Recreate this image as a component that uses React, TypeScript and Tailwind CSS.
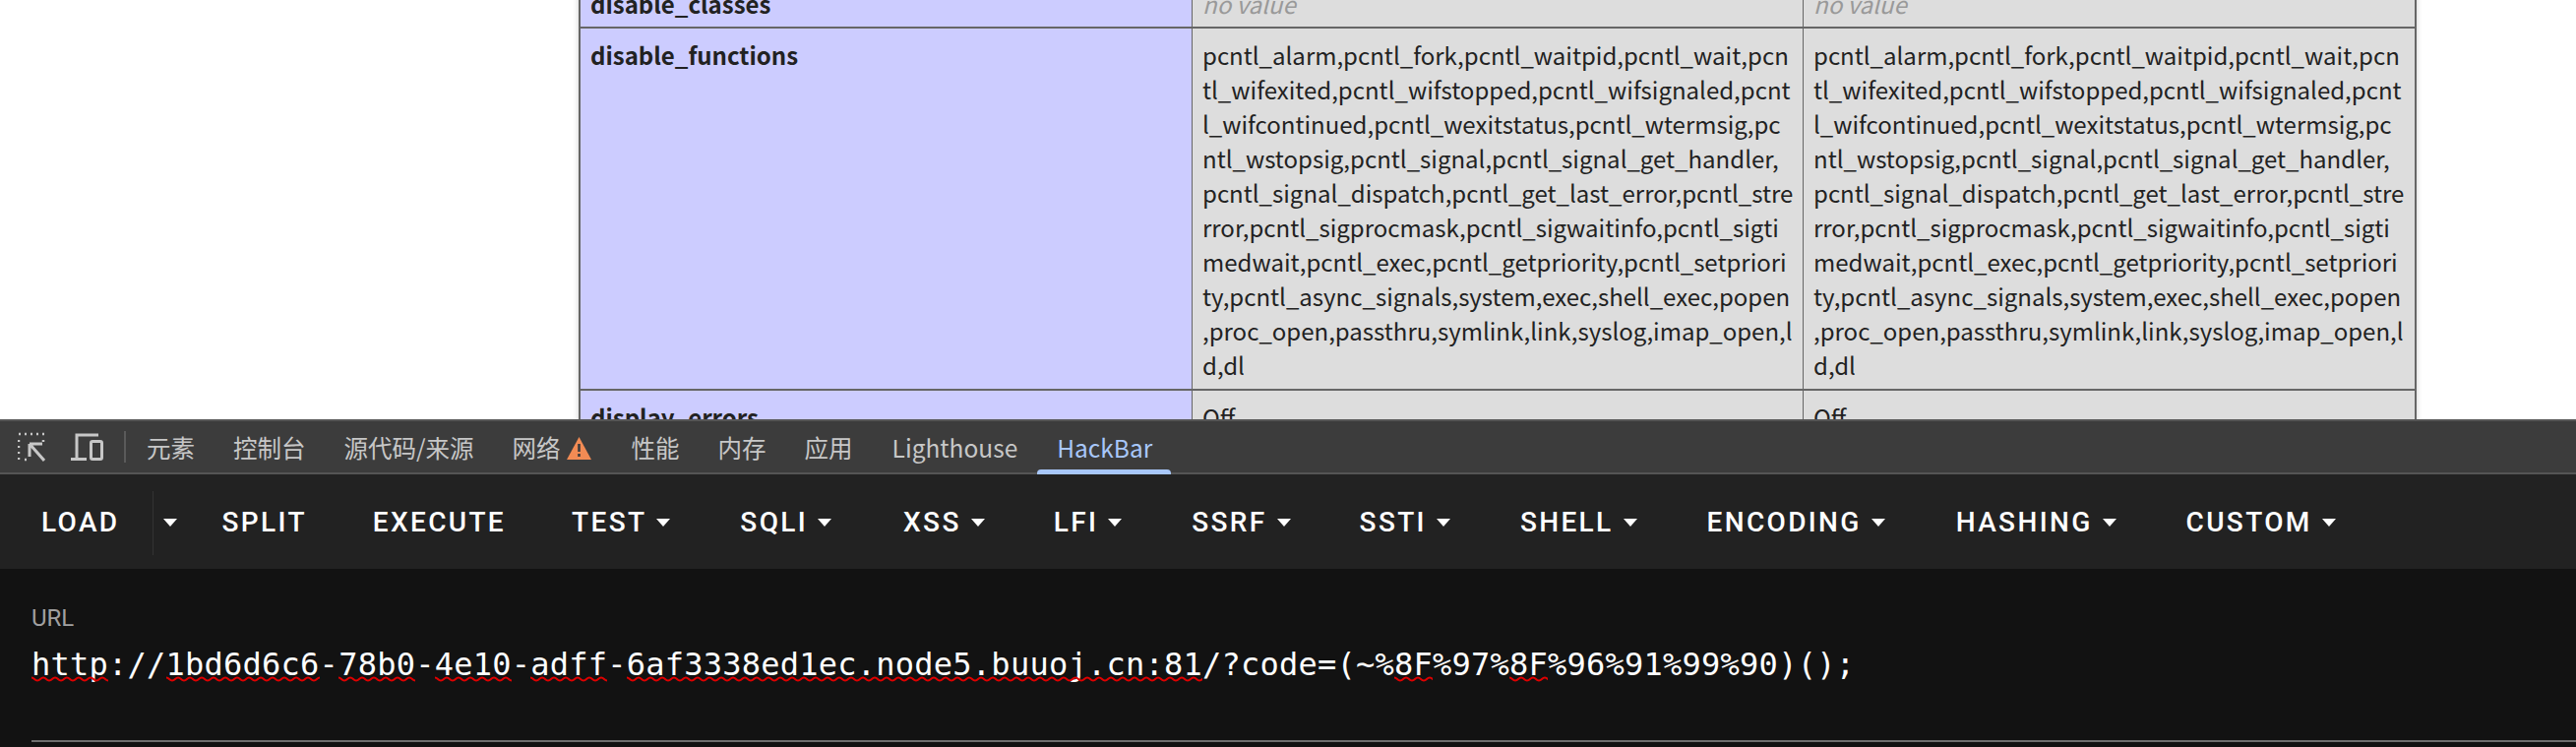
import React from "react";

const LINES = [
  "pcntl_alarm,pcntl_fork,pcntl_waitpid,pcntl_wait,pcn",
  "tl_wifexited,pcntl_wifstopped,pcntl_wifsignaled,pcnt",
  "l_wifcontinued,pcntl_wexitstatus,pcntl_wtermsig,pc",
  "ntl_wstopsig,pcntl_signal,pcntl_signal_get_handler,",
  "pcntl_signal_dispatch,pcntl_get_last_error,pcntl_stre",
  "rror,pcntl_sigprocmask,pcntl_sigwaitinfo,pcntl_sigti",
  "medwait,pcntl_exec,pcntl_getpriority,pcntl_setpriori",
  "ty,pcntl_async_signals,system,exec,shell_exec,popen",
  ",proc_open,passthru,symlink,link,syslog,imap_open,l",
  "d,dl",
];

const SANS = "font-['Noto_Sans_CJK_SC','Noto_Sans',sans-serif]";

function Values({ w }: { w: string }) {
  return (
    <div className={`${w} shrink-0 border-l border-[#666] bg-[#ddd] pl-[10px] pt-[9px] pb-[7px] text-[24px] leading-[35px] text-[#222]`}>
      {LINES.map((l) => (
        <div key={l} className="whitespace-nowrap">{l}</div>
      ))}
    </div>
  );
}

function Row({ name, a, b }: { name: string; a: React.ReactNode; b: React.ReactNode }) {
  return (
    <div className="flex border-t-2 border-[#666]">
      <div className="w-[621px] shrink-0 bg-[#ccf] pl-[10px] pt-[9px] text-[24px] font-bold leading-[35px] text-[#222]">{name}</div>
      {a}
      {b}
    </div>
  );
}

function Cell({ children, italic, w }: { children: React.ReactNode; italic?: boolean; w: string }) {
  return (
    <div className={`${w} shrink-0 border-l border-[#666] bg-[#ddd] pl-[10px] pt-[9px] pb-[6px] text-[24px] leading-[35px] ${italic ? "italic text-[#999]" : "text-[#222]"}`}>
      {children}
    </div>
  );
}

function Caret() {
  return <span className="ml-[10px] inline-block h-0 w-0 border-x-[7.5px] border-t-[8px] border-x-transparent border-t-white" />;
}

function ToolButton({ label, caret, ml }: { label: string; caret?: boolean; ml: string }) {
  return (
    <div className={`flex items-center text-[28px] font-medium tracking-[2.35px] text-white ${ml}`}>
      <span>{label}</span>
      {caret && <Caret />}
    </div>
  );
}

function Tab({ label, ml, active, children }: { label: string; ml: string; active?: boolean; children?: React.ReactNode }) {
  return (
    <div className={`flex items-center whitespace-nowrap pt-[2px] text-[24.5px] ${active ? "text-[#a8c7fa]" : "text-[#c7c7c7]"} ${ml}`}>
      {label}
      {children}
    </div>
  );
}

function Sq({ children }: { children: React.ReactNode }) {
  return (
    <span className="relative inline-block">
      {children}
      <svg className="absolute left-0 top-[34px]" width="100%" height="6">
        <defs>
          <pattern id="squiggle" width="12" height="6" patternUnits="userSpaceOnUse">
            <path d="M0 1.5C3 1.5 3 4.5 6 4.5S9 1.5 12 1.5" fill="none" stroke="#e00000" strokeWidth="2" />
          </pattern>
        </defs>
        <rect width="100%" height="6" fill="url(#squiggle)" />
      </svg>
    </span>
  );
}

export default function App() {
  return (
    <div className={`flex h-[759px] w-[2618px] flex-col overflow-hidden bg-white ${SANS}`}>
      <div className="h-[426px] shrink-0 overflow-hidden pl-[588px]">
        <div className="-mt-[25px] w-[1868px] border-x-2 border-[#666] shadow-[0_0_6px_rgba(0,0,0,0.2)]">
          <Row name="disable_classes" a={<Cell italic w="w-[621px]">no value</Cell>} b={<Cell italic w="w-[622px]">no value</Cell>} />
          <Row name="disable_functions" a={<Values w="w-[621px]" />} b={<Values w="w-[622px]" />} />
          <Row name="display_errors" a={<Cell w="w-[621px]">Off</Cell>} b={<Cell w="w-[622px]">Off</Cell>} />
        </div>
      </div>

      <div className="relative flex h-[56px] shrink-0 items-center border-y-2 border-[#555] bg-[#3c3c3c]">
        <svg className="ml-[18px]" width="28" height="30" viewBox="0 0 28 30" fill="none">
          <path d="M1 2h2M7 2h2M13 2h2M19 2h2M25 2h2M1 8v2M1 14v2M1 20v2M1 26v2M7 28h2M26 8v2" stroke="#c7c7c7" strokeWidth="2.5" />
          <path d="M12 12h13M12 12v13M12 12l15 17" stroke="#c7c7c7" strokeWidth="3" />
        </svg>
        <svg className="ml-[26px]" width="34" height="30" viewBox="0 0 34 30" fill="none">
          <path d="M6 27V3h22M0 27.5h16" stroke="#c7c7c7" strokeWidth="3" />
          <rect x="20.5" y="9.5" width="11" height="18" rx="1.5" stroke="#c7c7c7" strokeWidth="3" />
        </svg>
        <div className="ml-[20px] h-[32px] w-[2px] bg-[#5a5a5a]" />
        <Tab label="元素" ml="ml-[21px]" />
        <Tab label="控制台" ml="ml-[39px]" />
        <Tab label="源代码/来源" ml="ml-[39px]" />
        <Tab label="网络" ml="ml-[39px]">
          <svg className="ml-[6px]" width="25" height="23" viewBox="0 0 25 23"><path d="M12.5 0L25 23H0z" fill="#f28b54" /><path d="M11.2 7h2.6v8h-2.6zM11.2 17h2.6v3h-2.6z" fill="#3c3c3c" /></svg>
        </Tab>
        <Tab label="性能" ml="ml-[41px]" />
        <Tab label="内存" ml="ml-[39px]" />
        <Tab label="应用" ml="ml-[39px]" />
        <Tab label="Lighthouse" ml="ml-[40px]" />
        <Tab label="HackBar" ml="ml-[40px]" active />
        <div className="absolute left-[1054px] top-[49px] h-[5px] w-[136px] rounded-t-[4px] bg-[#a8c7fa]" />
      </div>

      <div className="flex h-[96px] shrink-0 items-center bg-[#222] pt-[2px] font-['Roboto',sans-serif]">
        <ToolButton label="LOAD" ml="ml-[42px]" />
        <div className="ml-[33px] flex h-[65px] items-center border-l border-[#333]"><Caret /></div>
        <ToolButton label="SPLIT" ml="ml-[46px]" />
        <ToolButton label="EXECUTE" ml="ml-[67px]" />
        <ToolButton label="TEST" caret ml="ml-[67px]" />
        <ToolButton label="SQLI" caret ml="ml-[71px]" />
        <ToolButton label="XSS" caret ml="ml-[73px]" />
        <ToolButton label="LFI" caret ml="ml-[70px]" />
        <ToolButton label="SSRF" caret ml="ml-[71px]" />
        <ToolButton label="SSTI" caret ml="ml-[70px]" />
        <ToolButton label="SHELL" caret ml="ml-[71px]" />
        <ToolButton label="ENCODING" caret ml="ml-[71px]" />
        <ToolButton label="HASHING" caret ml="ml-[72px]" />
        <ToolButton label="CUSTOM" caret ml="ml-[71px]" />
      </div>

      <div className="flex-1 bg-[#121212] pl-[32px] pt-[36px] font-['Roboto',sans-serif]">
        <div className="text-[24px] leading-[28px] text-[#a0a0a0]">URL</div>
        <div className="mt-[11px] whitespace-nowrap font-['DejaVu_Sans_Mono',monospace] text-[32px] leading-[44px] tracking-[0.24px] text-white">
          <Sq>http</Sq>://<Sq>1bd6d6c6</Sq>-<Sq>78b0</Sq>-<Sq>4e10</Sq>-<Sq>adff</Sq>-<Sq>6af3338ed1ec.node5.buuoj.cn:81</Sq>/?code=(~%<Sq>8F</Sq>%97%<Sq>8F</Sq>%96%91%99%90)();
        </div>
        <div className="mt-[55px] h-[2px] bg-[#6f6f6f]" />
      </div>
    </div>
  );
}
